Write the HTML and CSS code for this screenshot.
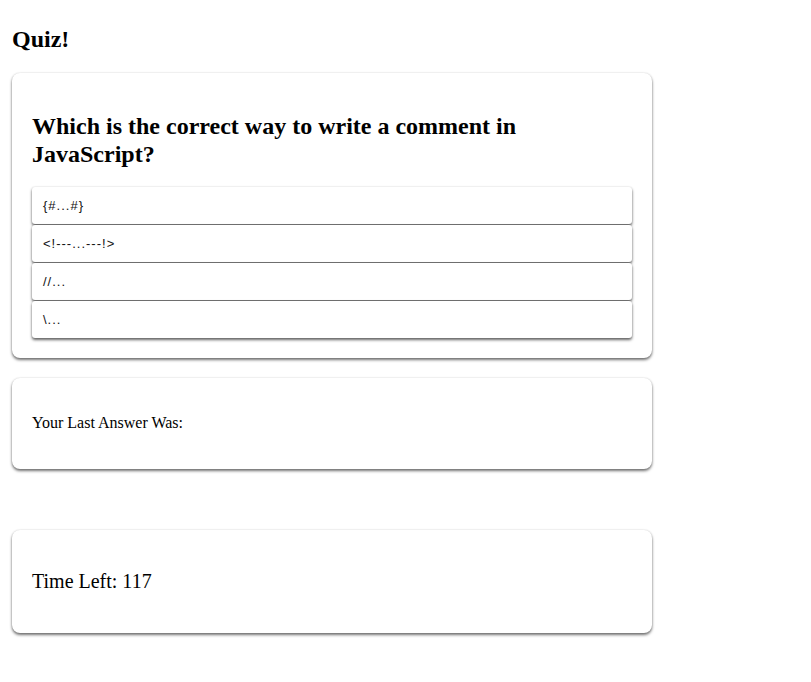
FILE: index.html
```html
<!DOCTYPE html>
<html>
<head>
<meta charset="utf-8">
<link rel="stylesheet" href="styles.css">
</head>
<body>
<div class="page">
  <h2 class="title">Quiz!</h2>
  <div class="card">
    <h2 class="question">Which is the correct way to write a comment in JavaScript?</h2>
    <div class="options">
      <div class="option">{#...#}</div>
      <div class="option">&lt;!---...---!&gt;</div>
      <div class="option">//...</div>
      <div class="option">\...</div>
    </div>
  </div>
  <div class="card">
    <p class="last">Your Last Answer Was:</p>
  </div>
  <div class="card timer">
    <p class="time">Time Left: 117</p>
  </div>
</div>
</body>
</html>
```
FILE: styles.css
```css
html, body {
  margin: 0;
  padding: 0;
  background: #fff;
}
.page {
  padding: 0 12px;
  font-family: "Liberation Serif", "Times New Roman", serif;
  color: #000;
}
.title {
  font-size: 24px;
  font-weight: bold;
  margin: 0;
  padding-top: 25.5px;
  margin-bottom: 20px;
  line-height: 27.6px;
}
.card {
  width: 640px;
  box-sizing: border-box;
  padding: 20px;
  border-radius: 8px;
  background: #fff;
  box-shadow: 0 0 2px rgba(0,0,0,0.15), 0 2px 3px rgba(0,0,0,0.55);
  margin-bottom: 20px;
}
.question {
  font-size: 24px;
  font-weight: bold;
  margin: 20px 0 19px;
  line-height: 27.6px;
}
.options {
  display: flex;
  flex-direction: column;
  gap: 1px;
}
.option {
  font-family: "Liberation Sans", Arial, sans-serif;
  font-size: 13px;
  letter-spacing: 1px;
  line-height: 15px;
  padding: 11px 11px;
  border-radius: 3px;
  background: #fff;
  color: #111;
  box-shadow: 0 0 2px rgba(0,0,0,0.15), 0 2px 3px rgba(0,0,0,0.6);
}
.last {
  font-size: 16px;
  margin: 16px 0;
  line-height: 18.4px;
}
.timer {
  margin-top: 61px;
}
.time {
  font-size: 20px;
  margin: 20px 0;
  line-height: 23px;
}
```
